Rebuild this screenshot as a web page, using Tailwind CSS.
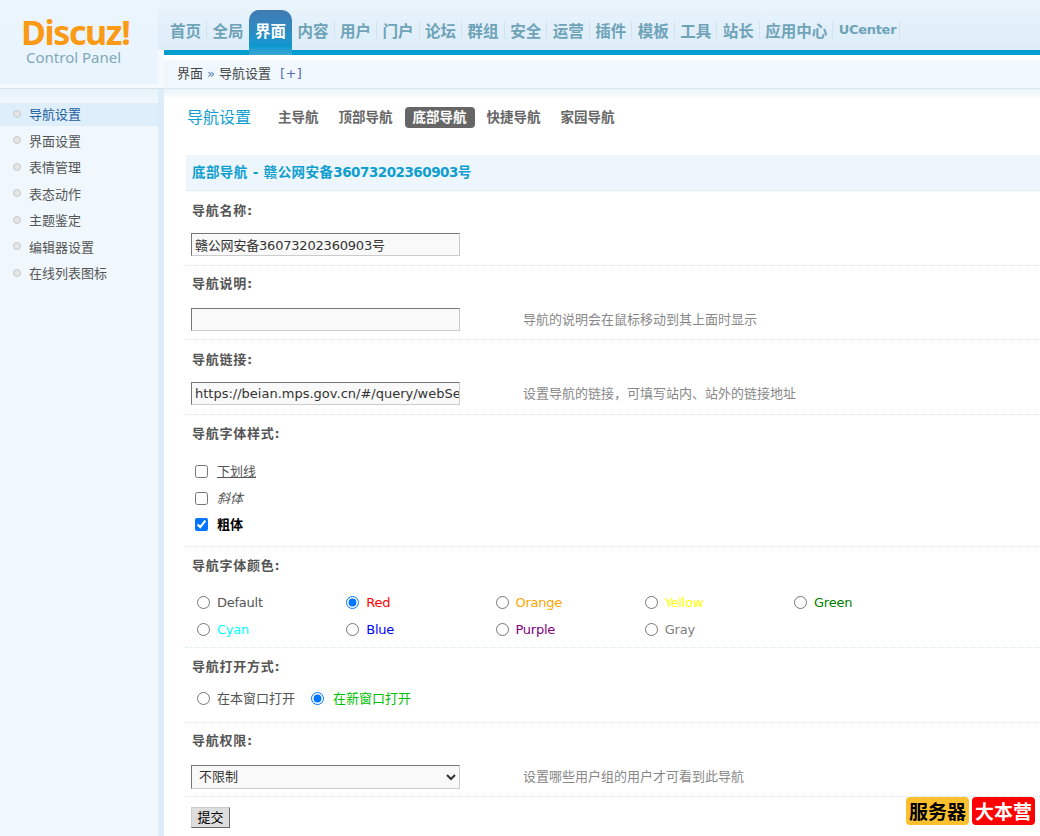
<!DOCTYPE html>
<html lang="zh-CN">
<head>
  <meta charset="UTF-8" />
  <title>Discuz! Control Panel</title>
  <script src="https://cdn.jsdelivr.net/npm/@tailwindcss/browser@4"></script>
</head>
<body class="relative w-[1040px] h-[836px] overflow-hidden bg-white text-[13px] text-[#555] font-['DejaVu_Sans','Noto_Sans_CJK_SC',sans-serif]">
  <div class="flex h-full">
    <!-- left column -->
    <aside class="w-[165px] shrink-0 flex flex-col">
      <div class="h-[88px] flex">
        <div class="w-[158px] flex flex-col">
          <div class="h-[84px] pl-[21px] bg-linear-to-b from-[#ebf5fd] to-[#eaf4fc]">
            <div class="pt-[14px] h-[50px] text-[34px] leading-[36px] font-bold tracking-[-1.4px] text-[#fb9a14] font-['Noto_Sans',sans-serif]">Discuz!</div>
            <div class="pl-[5px] text-[15px] leading-[14px] text-[#7fa8ba] font-['Noto_Sans',sans-serif]">Control Panel</div>
          </div>
          <div class="h-[4px] bg-[#f5fafe]"></div>
        </div>
        <div class="w-[7px] flex flex-col">
          <div class="h-[50px] bg-linear-to-b from-[#ebf5fd] via-[#e3f0fa] to-[#deedf9]"></div>
          <div class="flex-1 bg-[#f5fafe]"></div>
        </div>
      </div>
      <div class="flex-1 flex border-t border-[#d6e4ec] border-r border-r-[#b5d5e0] bg-[#dcedf9]">
        <div class="w-[158px] bg-linear-to-b from-[#e6f2fa] to-[#f0f8fd] to-[14px]">
          <ul class="pt-[14.4px]">
            <li class="h-[26.5px]"><a class="flex items-center h-[23px] pl-[13px] gap-[8px] bg-[#deeefa] text-[#1f5f9e]"><span class="size-[8px] -mt-[2px] rounded-full bg-[#e6e6e6] border border-[#c8c8c8]"></span>导航设置</a></li>
            <li class="h-[26.5px]"><a class="flex items-center h-[23px] pl-[13px] gap-[8px]"><span class="size-[8px] -mt-[2px] rounded-full bg-[#e6e6e6] border border-[#c8c8c8]"></span>界面设置</a></li>
            <li class="h-[26.5px]"><a class="flex items-center h-[23px] pl-[13px] gap-[8px]"><span class="size-[8px] -mt-[2px] rounded-full bg-[#e6e6e6] border border-[#c8c8c8]"></span>表情管理</a></li>
            <li class="h-[26.5px]"><a class="flex items-center h-[23px] pl-[13px] gap-[8px]"><span class="size-[8px] -mt-[2px] rounded-full bg-[#e6e6e6] border border-[#c8c8c8]"></span>表态动作</a></li>
            <li class="h-[26.5px]"><a class="flex items-center h-[23px] pl-[13px] gap-[8px]"><span class="size-[8px] -mt-[2px] rounded-full bg-[#e6e6e6] border border-[#c8c8c8]"></span>主题鉴定</a></li>
            <li class="h-[26.5px]"><a class="flex items-center h-[23px] pl-[13px] gap-[8px]"><span class="size-[8px] -mt-[2px] rounded-full bg-[#e6e6e6] border border-[#c8c8c8]"></span>编辑器设置</a></li>
            <li class="h-[26.5px]"><a class="flex items-center h-[23px] pl-[13px] gap-[8px]"><span class="size-[8px] -mt-[2px] rounded-full bg-[#e6e6e6] border border-[#c8c8c8]"></span>在线列表图标</a></li>
          </ul>
        </div>
      </div>
    </aside>

    <!-- right column -->
    <div class="flex-1 min-w-0 flex flex-col -ml-px">
      <!-- top nav -->
      <nav class="relative z-10 h-[50px] flex pl-[0.75px] text-[15.5px] leading-[18px] font-bold text-[#6ea3b8] bg-linear-to-b from-[#ebf5fd] via-[#e3f0fa] to-[#deedf9] font-['Noto_Sans_CJK_SC',sans-serif]">
        <a class="mt-[10px] h-[45px] pt-[11px]"><span class="block px-[5.25px] border-r border-[#d0e3ef]">首页</span></a>
        <a class="mt-[10px] h-[45px] pt-[11px]"><span class="block px-[5.25px] border-r border-[#d0e3ef]">全局</span></a>
        <a class="-ml-px pl-px mt-[10px] h-[45px] pt-[11px] rounded-t-[10px] text-white bg-linear-to-b from-[#3f7bb2] via-[#0a98cf] via-80% to-[#38a8d6]"><span class="block px-[5.25px] border-r border-transparent">界面</span></a>
        <a class="mt-[10px] h-[45px] pt-[11px]"><span class="block px-[5.25px] border-r border-[#d0e3ef]">内容</span></a>
        <a class="mt-[10px] h-[45px] pt-[11px]"><span class="block px-[5.25px] border-r border-[#d0e3ef]">用户</span></a>
        <a class="mt-[10px] h-[45px] pt-[11px]"><span class="block px-[5.25px] border-r border-[#d0e3ef]">门户</span></a>
        <a class="mt-[10px] h-[45px] pt-[11px]"><span class="block px-[5.25px] border-r border-[#d0e3ef]">论坛</span></a>
        <a class="mt-[10px] h-[45px] pt-[11px]"><span class="block px-[5.25px] border-r border-[#d0e3ef]">群组</span></a>
        <a class="mt-[10px] h-[45px] pt-[11px]"><span class="block px-[5.25px] border-r border-[#d0e3ef]">安全</span></a>
        <a class="mt-[10px] h-[45px] pt-[11px]"><span class="block px-[5.25px] border-r border-[#d0e3ef]">运营</span></a>
        <a class="mt-[10px] h-[45px] pt-[11px]"><span class="block px-[5.25px] border-r border-[#d0e3ef]">插件</span></a>
        <a class="mt-[10px] h-[45px] pt-[11px]"><span class="block px-[5.25px] border-r border-[#d0e3ef]">模板</span></a>
        <a class="mt-[10px] h-[45px] pt-[11px]"><span class="block px-[5.25px] border-r border-[#d0e3ef]">工具</span></a>
        <a class="mt-[10px] h-[45px] pt-[11px]"><span class="block px-[5.25px] border-r border-[#d0e3ef]">站长</span></a>
        <a class="mt-[10px] h-[45px] pt-[11px]"><span class="block px-[5.25px] border-r border-[#d0e3ef]">应用中心</span></a>
        <a class="mt-[10px] h-[45px] pt-[11px]"><span class="block pl-[5.25px] pr-[3px] border-r border-[#d0e3ef] text-[13px] tracking-[-0.3px] font-['DejaVu_Sans',sans-serif]">UCenter</span></a>
      </nav>
      <div class="h-[5px] bg-[#049dd0]"></div>
      <div class="h-[5px] bg-white"></div>
      <!-- breadcrumb -->
      <div class="h-[29px] flex items-center pl-[13px] bg-[#f0f8fd] border-b border-[#d9e8f0] text-[#444]">
        <span>界面</span><span class="mx-[4px] text-[#5a7fb0]">»</span><span>导航设置</span><span class="ml-[9px] tracking-[0.4px] text-[#5a6ab0]">[+]</span>
      </div>

      <main class="flex-1 pl-[22px] bg-linear-to-b from-[#e9f3fa] to-white to-[11px] bg-no-repeat">
        <!-- tabs -->
        <div class="h-[66px] pt-[18px] flex items-start">
          <h1 class="w-[84px] pl-px text-[16px] leading-[21px] text-[#109ecf] font-normal">导航设置</h1>
          <div class="flex gap-[4px] text-[13.5px] leading-[21px] font-bold text-[#666]">
            <a class="px-2">主导航</a>
            <a class="px-2">顶部导航</a>
            <a class="px-2 rounded-[4px] bg-[#666] text-white">底部导航</a>
            <a class="px-2">快捷导航</a>
            <a class="px-2">家园导航</a>
          </div>
        </div>

        <!-- form -->
        <form>
          <div class="h-[36px] flex items-center pl-[6px] bg-[#edf6fd] border-b border-dotted border-[#d3e3ee] text-[13.5px] tracking-[0.4px] font-bold text-[#109ecf] whitespace-pre">底部导航 - 赣公网安备<span class="tracking-[-0.5px]">36073202360903</span>号</div>

          <div class="h-[74.5px] pl-[5px] border-b border-dotted border-[#d8e8f0]">
            <div class="h-[39px] flex items-center pl-px font-bold tracking-[0.75px]">导航名称:</div>
            <div class="mt-[3px] flex items-center">
              <input type="text" value="赣公网安备36073202360903号" class="w-[269px] h-[23px] pl-[3px] bg-[#f9f9f9] text-[#333] border border-t-[#767676] border-l-[#767676] border-r-[#ccc] border-b-[#ccc] tracking-[-0.2px]" />
            </div>
          </div>

          <div class="h-[74.5px] pl-[5px] border-b border-dotted border-[#d8e8f0]">
            <div class="h-[37px] flex items-center pl-px font-bold tracking-[0.75px]">导航说明:</div>
            <div class="mt-[5px] flex items-center">
              <input type="text" class="w-[269px] h-[23px] pl-[3px] bg-[#f9f9f9] text-[#333] border border-t-[#767676] border-l-[#767676] border-r-[#ccc] border-b-[#ccc]" />
              <span class="ml-[63px] mt-[2px] text-[#888]">导航的说明会在鼠标移动到其上面时显示</span>
            </div>
          </div>

          <div class="h-[74.5px] pl-[5px] border-b border-dotted border-[#d8e8f0]">
            <div class="h-[39px] flex items-center pl-px font-bold tracking-[0.75px]">导航链接:</div>
            <div class="mt-[3px] flex items-center">
              <input type="text" value="https://beian.mps.gov.cn/#/query/webSearch" class="w-[269px] h-[23px] pl-[3px] bg-[#f9f9f9] text-[#333] border border-t-[#767676] border-l-[#767676] border-r-[#ccc] border-b-[#ccc]" />
              <span class="ml-[63px] text-[#888]">设置导航的链接，可填写站内、站外的链接地址</span>
            </div>
          </div>

          <div class="h-[132px] pl-[5px] border-b border-dotted border-[#d8e8f0]">
            <div class="h-[39px] flex items-center pl-px font-bold tracking-[0.75px]">导航字体样式:</div>
            <div class="mt-[5px] pl-[4px]">
              <label class="flex items-center h-[26.5px] gap-[9px]"><input type="checkbox" class="size-[13px]" /><span class="underline">下划线</span></label>
              <label class="flex items-center h-[26.5px] gap-[9px]"><input type="checkbox" class="size-[13px]" /><span class="italic">斜体</span></label>
              <label class="flex items-center h-[26.5px] gap-[9px]"><input type="checkbox" checked class="size-[13px]" /><span class="font-bold text-black">粗体</span></label>
            </div>
          </div>

          <div class="h-[101px] border-b border-dotted border-[#d8e8f0]">
            <div class="h-[39px] flex items-center pl-[6px] font-bold tracking-[0.75px]">导航字体颜色:</div>
            <div class="mt-[3px] pl-[11px] grid grid-cols-[repeat(5,149.25px)] auto-rows-[27px] tracking-[-0.25px]">
              <label class="flex items-center gap-[7px]"><input type="radio" name="color" class="size-[13px]" /><span class="mt-[2px]">Default</span></label>
              <label class="flex items-center gap-[7px]"><input type="radio" name="color" checked class="size-[13px]" /><span class="mt-[2px] text-[#f00]">Red</span></label>
              <label class="flex items-center gap-[7px]"><input type="radio" name="color" class="size-[13px]" /><span class="mt-[2px] text-[#ffa500]">Orange</span></label>
              <label class="flex items-center gap-[7px]"><input type="radio" name="color" class="size-[13px]" /><span class="mt-[2px] text-[#ff0]">Yellow</span></label>
              <label class="flex items-center gap-[7px]"><input type="radio" name="color" class="size-[13px]" /><span class="mt-[2px] text-[#008000]">Green</span></label>
              <label class="flex items-center gap-[7px]"><input type="radio" name="color" class="size-[13px]" /><span class="mt-[2px] text-[#0ff]">Cyan</span></label>
              <label class="flex items-center gap-[7px]"><input type="radio" name="color" class="size-[13px]" /><span class="mt-[2px] text-[#00f]">Blue</span></label>
              <label class="flex items-center gap-[7px]"><input type="radio" name="color" class="size-[13px]" /><span class="mt-[2px] text-[#800080]">Purple</span></label>
              <label class="flex items-center gap-[7px]"><input type="radio" name="color" class="size-[13px]" /><span class="mt-[2px] text-[#808080]">Gray</span></label>
            </div>
          </div>

          <div class="h-[75px] border-b border-dotted border-[#d8e8f0]">
            <div class="h-[39px] flex items-center pl-[6px] font-bold tracking-[0.75px]">导航打开方式:</div>
            <div class="-mt-px pl-[11px] h-[26px] flex items-center">
              <label class="flex items-center gap-[7px] mr-[16px]"><input type="radio" name="target" class="size-[13px]" /><span>在本窗口打开</span></label>
              <label class="flex items-center gap-[9px]"><input type="radio" name="target" checked class="size-[13px]" /><span class="text-[#00c000]">在新窗口打开</span></label>
            </div>
          </div>

          <div class="h-[74px] pl-[5px] border-b border-dotted border-[#d8e8f0]">
            <div class="h-[37px] flex items-center pl-px font-bold tracking-[0.75px]">导航权限:</div>
            <div class="mt-[5px] flex items-center">
              <select class="w-[269px] h-[24px] pl-[3px] bg-[#f9f9f9] text-[#333] border border-t-[#767676] border-l-[#767676] border-r-[#ccc] border-b-[#ccc]"><option>不限制</option></select>
              <span class="ml-[63px] text-[#888]">设置哪些用户组的用户才可看到此导航</span>
            </div>
          </div>

          <div class="pl-[5px] pt-[10px]">
            <button type="button" class="w-[39px] h-[21px] bg-[#ddd] text-[13px] text-black border border-t-[#ccc] border-l-[#ccc] border-r-[#666] border-b-[#666]">提交</button>
          </div>
        </form>
      </main>
    </div>
  </div>

  <!-- watermark -->
  <div class="absolute left-[906px] top-[797px] flex gap-[3px] text-[19px] leading-[28px] font-bold font-['Noto_Sans_CJK_SC',sans-serif]">
    <span class="w-[63px] h-[28px] text-center rounded-[4px] bg-[#fcc02e] text-black">服务器</span>
    <span class="w-[63px] h-[28px] text-center rounded-[4px] bg-[#f00] text-white">大本营</span>
  </div>
</body>
</html>
